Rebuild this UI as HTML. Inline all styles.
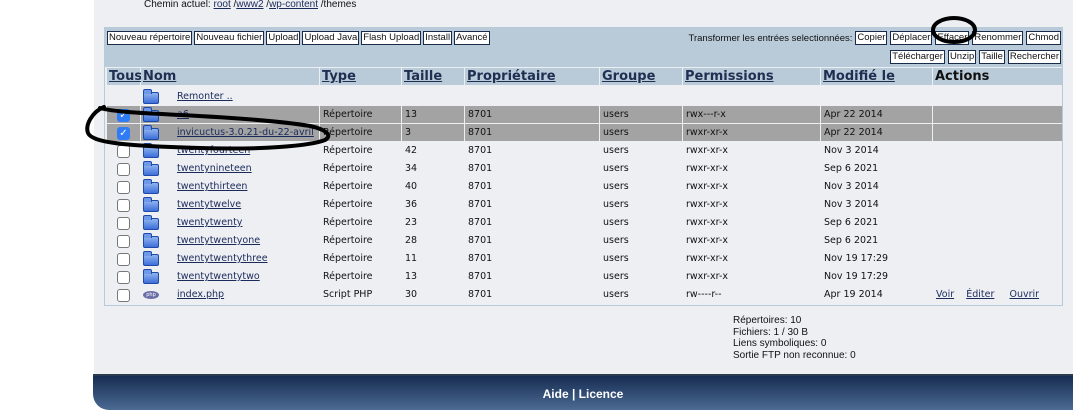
<!DOCTYPE html>
<html><head><meta charset="utf-8"><style>
*{margin:0;padding:0;box-sizing:border-box}
body{width:1073px;height:413px;background:#fff;position:relative;overflow:hidden;font-family:"DejaVu Sans","Liberation Sans",sans-serif;color:#111}
#panel{position:absolute;left:94px;top:0;width:979px;height:376px;background:#eeeff3}
.a{position:absolute;white-space:nowrap}
#path{left:144px;top:-1px;font-size:10px;line-height:12px;font-family:"Liberation Sans",sans-serif}
#path u{color:#1a2a5a}
#box{position:absolute;left:104px;top:27px;width:959px;height:279px;border:1px solid #b7cad9;background:#eeeff3}
#tb{position:absolute;left:0;top:0;width:957px;height:39px;background:#b9cbd9}
.bar{position:absolute;display:flex;gap:3px;align-items:center;font:9.5px "Liberation Sans",sans-serif}
.btn{height:14px;border:1px solid #1a2a4a;background:#fff;line-height:12px;padding:0 1px;color:#111;white-space:nowrap}
.h{position:absolute;top:40px;height:17px;background:#b9cbd9;font:bold 13px "DejaVu Sans",sans-serif;color:#1e2f52;text-decoration:underline;line-height:17px;padding-left:2px}
.row{position:absolute;left:0;width:957px;height:18px;font-size:9.5px;line-height:18px}
.c{position:absolute;top:0;height:17px;padding-left:3px;white-space:nowrap}
.sel .c{background:#a3a3a3}
.cb{position:absolute;left:12px;top:3px;width:13px;height:13px;border:1px solid #777;border-radius:3px;background:#fff}
.ck{background:#2f7cf6;border-color:#2f7cf6;color:#fff;font-size:10px;line-height:11px;text-align:center}
.fold{position:absolute;left:38px;top:4px;width:16px;height:12px;border-radius:2px;background:linear-gradient(#8fb4f0,#3d6fd8);border:1px solid #1d4aa8}
.fold:before{content:"";position:absolute;left:-1px;top:-4px;width:7px;height:4px;background:#6e98e8;border:1px solid #1d4aa8;border-bottom:none;border-radius:2px 2px 0 0}
.nm{color:#1a2a5a;text-decoration:underline}
#foot{position:absolute;left:93px;top:374px;width:980px;height:36px;background:linear-gradient(#172c52,#4b6b93);border-top:2px solid #2a3b50;border-radius:0 0 0 16px;color:#fff;font:bold 12px "Liberation Sans",sans-serif;text-align:center;line-height:36px}
#stats{left:733px;top:315px;font:10px "Liberation Sans",sans-serif;line-height:11.5px}
</style></head><body>
<div id="panel"></div>
<div class="a" id="path">Chemin actuel: <u>root</u> /<u>www2</u> /<u>wp-content</u> /themes</div>
<div id="box">
<div id="tb">
<div class="bar" style="left:2px;top:3px;gap:2px"><span class="btn">Nouveau répertoire</span><span class="btn">Nouveau fichier</span><span class="btn">Upload</span><span class="btn">Upload Java</span><span class="btn">Flash Upload</span><span class="btn">Install</span><span class="btn">Avancé</span></div>
<div class="bar" style="right:1px;top:3px"><span>Transformer les entrées selectionnées:</span><span class="btn">Copier</span><span class="btn">Déplacer</span><span class="btn">Effacer</span><span class="btn">Renommer</span><span class="btn">Chmod</span></div>
<div class="bar" style="right:1px;top:22px"><span class="btn">Télécharger</span><span class="btn">Unzip</span><span class="btn">Taille</span><span class="btn">Rechercher</span></div>
</div>
<div class="h" style="left:2px;width:33px">Tous</div>
<div class="h" style="left:36px;width:178px">Nom</div>
<div class="h" style="left:215px;width:81px">Type</div>
<div class="h" style="left:297px;width:62px">Taille</div>
<div class="h" style="left:360px;width:134px">Propriétaire</div>
<div class="h" style="left:495px;width:82px">Groupe</div>
<div class="h" style="left:578px;width:137px">Permissions</div>
<div class="h" style="left:716px;width:111px">Modifié le</div>
<div class="h" style="left:828px;width:129px;text-decoration:none;color:#111">Actions</div>
<div id="rows"></div>
</div>
<div class="a" id="stats">Répertoires: 10<br>Fichiers: 1 / 30 B<br>Liens symboliques: 0<br>Sortie FTP non reconnue: 0</div>
<div id="foot">Aide | Licence</div>
<svg class="a" style="left:0;top:0" width="1073" height="413"><g fill="none" stroke="#000" stroke-width="4" stroke-linecap="round">
<ellipse cx="954" cy="30" rx="21" ry="12"/>
<path d="M104 107 C92 112 85 125 88 133 C92 142 120 146 200 148 C260 150 310 146 325 140 C332 136 328 130 310 126 C280 121 240 118 180 115 C140 113 115 112 100 108"/>
</g></svg>
<script>
var d=[["Remonter ..","","","","","","",0,0,1],
["a6","Répertoire","13","8701","users","rwx---r-x","Apr 22 2014",1,1],
["invicuctus-3.0.21-du-22-avril","Répertoire","3","8701","users","rwxr-xr-x","Apr 22 2014",1,1],
["twentyfourteen","Répertoire","42","8701","users","rwxr-xr-x","Nov 3 2014",0,1],
["twentynineteen","Répertoire","34","8701","users","rwxr-xr-x","Sep 6 2021",0,1],
["twentythirteen","Répertoire","40","8701","users","rwxr-xr-x","Nov 3 2014",0,1],
["twentytwelve","Répertoire","36","8701","users","rwxr-xr-x","Nov 3 2014",0,1],
["twentytwenty","Répertoire","23","8701","users","rwxr-xr-x","Sep 6 2021",0,1],
["twentytwentyone","Répertoire","28","8701","users","rwxr-xr-x","Sep 6 2021",0,1],
["twentytwentythree","Répertoire","11","8701","users","rwxr-xr-x","Nov 19 17:29",0,1],
["twentytwentytwo","Répertoire","13","8701","users","rwxr-xr-x","Nov 19 17:29",0,1],
["index.php","Script PHP","30","8701","users","rw----r--","Apr 19 2014",0,2]];
var cols=[[215,81],[297,62],[360,134],[495,82],[578,137],[716,111]];
var h="";
d.forEach(function(r,i){
 var top=60+i*18;
 h+='<div class="row'+(r[7]?' sel':'')+'" style="top:'+top+'px">';
 if(r[7]){h+='<div class="c" style="left:2px;width:33px"></div><div class="c" style="left:36px;width:33px"></div><div class="c" style="left:70px;width:144px"></div><div class="c" style="left:828px;width:129px"></div>';}
 if(i>0)h+='<div class="cb'+(r[7]?' ck':'')+'">'+(r[7]?'✓':'')+'</div>';
 if(r[8]==2)h+='<div style="position:absolute;left:38px;top:5px;width:16px;height:8px;border-radius:50%;background:#6a6fa8;color:#fff;font-size:5px;line-height:8px;text-align:center">php</div>';
 else h+='<div class="fold"></div>';
 h+='<div class="c" style="left:69px;width:145px"><span class="nm">'+r[0]+'</span></div>';
 for(var k=0;k<6;k++)if(r[k+1]||r[7])h+='<div class="c" style="left:'+cols[k][0]+'px;width:'+cols[k][1]+'px">'+r[k+1]+'</div>';
 if(r[8]==2)h+='<div class="c" style="left:828px;width:129px"><span class="nm">Voir</span>&nbsp;&nbsp;&nbsp;&nbsp;<span class="nm">Éditer</span>&nbsp;&nbsp;&nbsp;&nbsp;&nbsp;<span class="nm">Ouvrir</span></div>';
 h+='</div>';
});
document.getElementById('rows').innerHTML=h;
</script>
</body></html>
